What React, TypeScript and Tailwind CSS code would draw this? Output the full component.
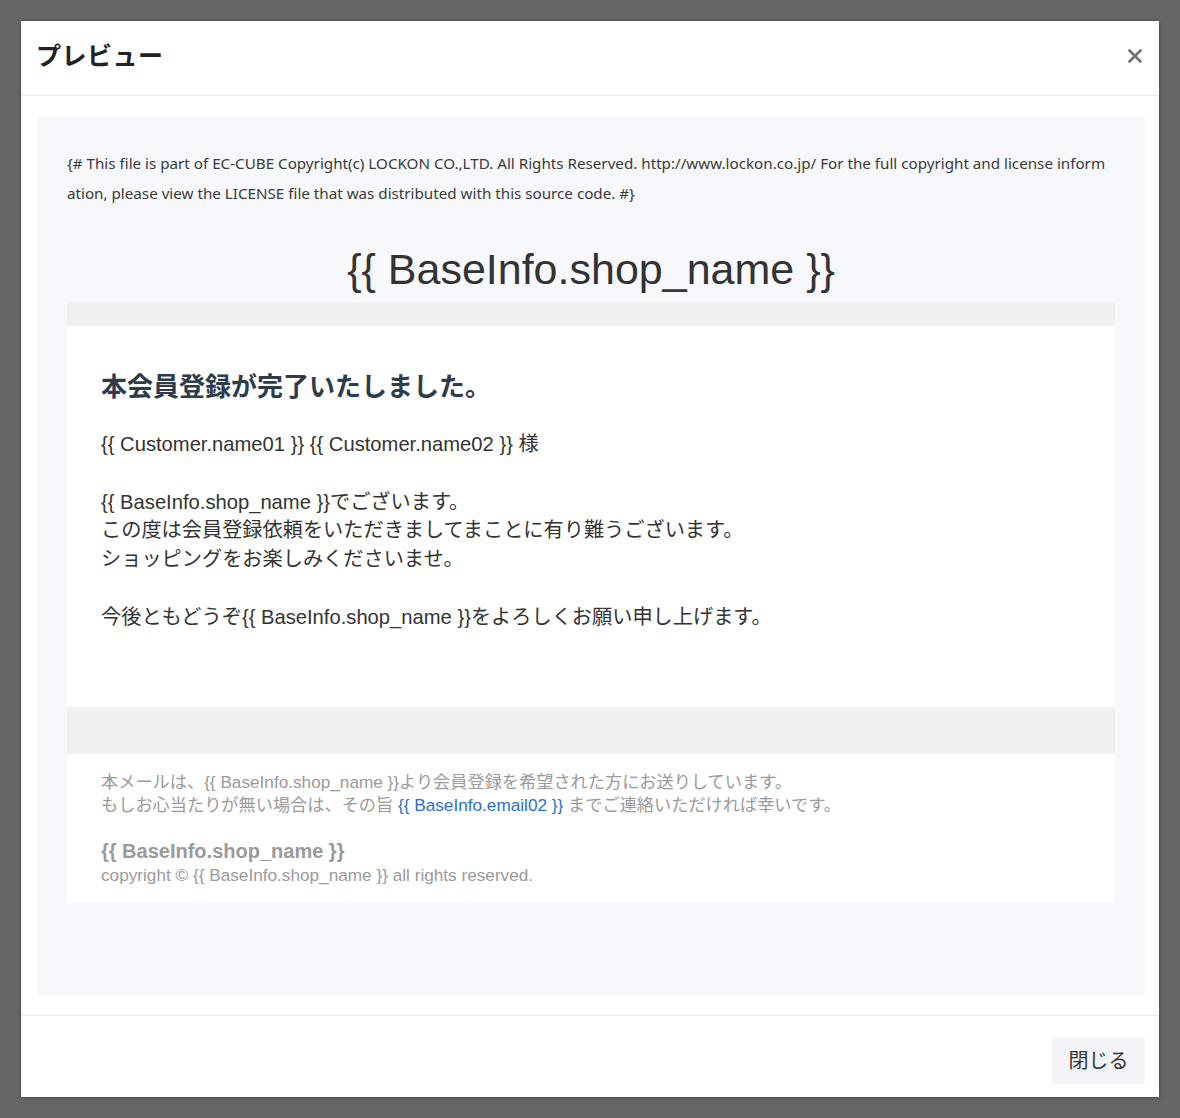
const sans = { fontFamily: '"Noto Sans", "Noto Sans CJK JP", sans-serif' };
const arial = { fontFamily: '"Liberation Sans", Arial, "Noto Sans CJK JP", sans-serif' };

const PreviewModal = () => {
  return (
    <div className="min-h-[1118px] w-full bg-[#666666] pt-[21px] pl-[21px] pr-[21px]">
      <div className="w-[1138px] h-[1076px] bg-white flex flex-col shadow-[0_0_4px_rgba(0,0,0,0.35)]">
        {/* header */}
        <div className="h-[75px] shrink-0 flex items-center justify-between pl-[15px] pr-[15px] pb-[4px] border-b border-[#e8eaed]">
          <h2 className="text-[25px] font-bold text-[#222] tracking-[0.5px]" style={sans}>
            プレビュー
          </h2>
          <button className="w-[18px] h-[18px] flex items-center justify-center">
            <svg width="14" height="14" viewBox="0 0 14 14">
              <path d="M1.5 1.5 L12.5 12.5 M12.5 1.5 L1.5 12.5" stroke="#707070" strokeWidth="2.6" strokeLinecap="round" />
            </svg>
          </button>
        </div>

        {/* body */}
        <div className="flex-1 pt-[21px] pb-[20px] pl-[16px] pr-[14px]">
          <div className="bg-[#f7f8fb] h-full px-[30px] pt-[31px]">
            <p className="text-[15.2px] leading-[30px] text-[#3a3a3a] break-all mr-[6px]" style={sans}>
              {"{# This file is part of EC-CUBE Copyright(c) LOCKON CO.,LTD. All Rights Reserved. http://www.lockon.co.jp/ For the full copyright and license information, please view the LICENSE file that was distributed with this source code. #}"}
            </p>
            <div className="text-center text-[43px] leading-[48px] text-[#333] mt-[37px] mb-[9px]" style={arial}>
              {"{{ BaseInfo.shop_name }}"}
            </div>
            <div className="h-[24px] bg-[#f0f0f0]" />
            <div className="bg-white pl-[34px] pt-[44px] pb-[75px]" style={arial}>
              <h3 className="text-[26px] leading-[34px] font-bold text-[#2e3b4a]">本会員登録が完了いたしました。</h3>
              <p className="text-[20.2px] leading-[28.8px] text-[#333] mt-[26px]">
                {"{{ Customer.name01 }} {{ Customer.name02 }} 様"}
                <br />
                <br />
                {"{{ BaseInfo.shop_name }}でございます。"}
                <br />
                この度は会員登録依頼をいただきましてまことに有り難うございます。
                <br />
                ショッピングをお楽しみくださいませ。
                <br />
                <br />
                {"今後ともどうぞ{{ BaseInfo.shop_name }}をよろしくお願い申し上げます。"}
              </p>
            </div>
            <div className="h-[47px] bg-[#f0f0f0]" />
            <div className="bg-white pl-[34px] pt-[17px] pb-[16px] text-[17.2px] leading-[23px] text-[#9a9a9a]" style={arial}>
              {"本メールは、{{ BaseInfo.shop_name }}より会員登録を希望された方にお送りしています。"}
              <br />
              もしお心当たりが無い場合は、その旨{" "}
              <span className="text-[#2a6fd3]">{"{{ BaseInfo.email02 }}"}</span> までご連絡いただければ幸いです。
              <br />
              <br />
              <span className="text-[20px] font-bold">{"{{ BaseInfo.shop_name }}"}</span>
              <br />
              {"copyright © {{ BaseInfo.shop_name }} all rights reserved."}
            </div>
          </div>
        </div>

        {/* footer */}
        <div className="h-[82px] shrink-0 border-t border-[#e8eaed] flex justify-end items-start pt-[21px] pr-[14px]">
          <button
            className="w-[93px] h-[47px] bg-[#f3f4f7] rounded-[3px] text-[20px] text-[#333] flex items-center justify-center"
            style={sans}
          >
            閉じる
          </button>
        </div>
      </div>
    </div>
  );
};

export default function App() {
  return <PreviewModal />;
}
